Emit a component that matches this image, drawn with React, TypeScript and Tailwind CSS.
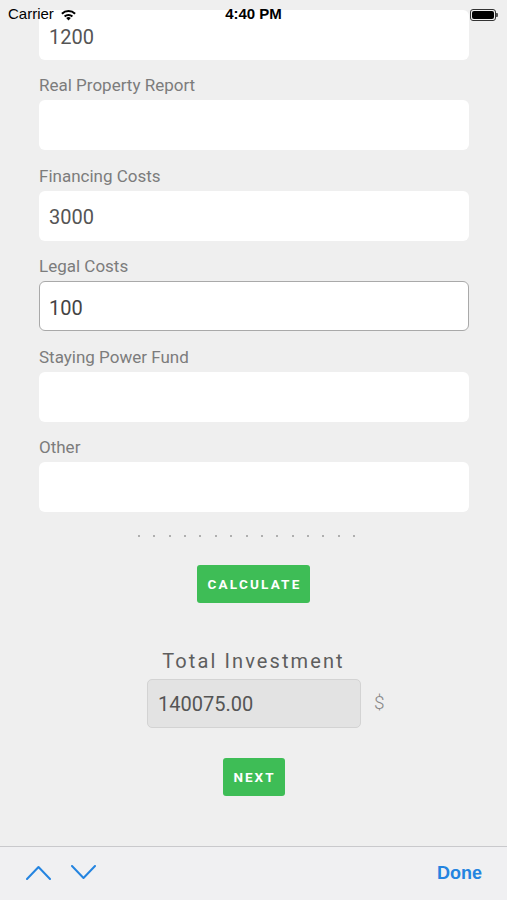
import React from "react";

const fields: { label: string; value: string; focused?: boolean }[] = [
  { label: "Appraisal", value: "1200" },
  { label: "Real Property Report", value: "" },
  { label: "Financing Costs", value: "3000" },
  { label: "Legal Costs", value: "100", focused: true },
  { label: "Staying Power Fund", value: "" },
  { label: "Other", value: "" },
];

export default function App() {
  return (
    <div
      className="relative w-[507px] h-[900px] overflow-hidden bg-[#efefef]"
      style={{ fontFamily: "Roboto, 'Liberation Sans', sans-serif" }}
    >
      {/* Status bar overlay */}
      <div
        className="absolute top-0 left-0 right-0 h-[29px] z-10 flex items-center justify-between px-[8px]"
        style={{ fontFamily: "'Liberation Sans', Arial, sans-serif" }}
      >
        <div className="flex items-center gap-[6px] text-[15px] text-black">
          <span>Carrier</span>
          <svg width="17" height="12" viewBox="0 0 17 12">
            <path d="M8.5 11.5 L6.2 9.1 A3.3 3.3 0 0 1 10.8 9.1 Z" fill="#000" />
            <path d="M3.9 6.8 A6.5 6.5 0 0 1 13.1 6.8 L11.7 8.2 A4.6 4.6 0 0 0 5.3 8.2 Z" fill="#000" />
            <path d="M1.2 4.1 A10.3 10.3 0 0 1 15.8 4.1 L14.4 5.5 A8.3 8.3 0 0 0 2.6 5.5 Z" fill="#000" />
          </svg>
        </div>
        <div className="absolute left-0 right-0 text-center text-[15px] font-bold text-black pointer-events-none">
          4:40 PM
        </div>
        <div className="flex items-center mr-[1px]">
          <div className="w-[26px] h-[12px] rounded-[3px] border border-[#333] p-[1px]">
            <div className="w-full h-full rounded-[2px] bg-black" />
          </div>
          <div className="w-[2px] h-[4px] bg-[#555] rounded-r-[1px]" />
        </div>
      </div>

      {/* Form */}
      <div className="flex flex-col gap-[15.4px] px-[39px] mt-[-15px] pr-[38px]">
        {fields.map((f, i) => (
          <div key={f.label} className="flex flex-col">
            <div
              className={
                i === 0
                  ? "h-[25px] pt-[1px] text-[17px] leading-[19px] text-[#7c7c7c] -translate-y-[5px]"
                  : "h-[25px] pt-[1px] text-[17px] leading-[19px] text-[#7c7c7c]"
              }
            >
              {f.label}
            </div>
            <div
              className={
                f.focused
                  ? "h-[50px] rounded-[6px] bg-white border-[1.5px] border-[#a9a9a9] flex items-center px-[9px] pt-[3px] text-[20px] text-[#444]"
                  : "h-[50px] rounded-[6px] bg-white flex items-center px-[10px] pt-[3px] text-[20px] text-[#555]"
              }
            >
              {f.value}
            </div>
          </div>
        ))}
      </div>

      {/* Dots */}
      <div className="flex justify-center mt-[23px]">
        <div className="flex gap-[13.4px] ml-[-14px]">
          {Array.from({ length: 15 }).map((_, i) => (
            <div key={i} className="w-[2px] h-[2px] rounded-full bg-[#9a9a9a]" />
          ))}
        </div>
      </div>

      {/* Calculate */}
      <div className="flex justify-center mt-[28px]">
        <button className="w-[113px] h-[38px] rounded-[3px] bg-[#3ebd56] text-white text-[13.5px] font-bold tracking-[2.2px] pl-[2px]">
          CALCULATE
        </button>
      </div>

      {/* Total Investment */}
      <div className="flex flex-col items-center mt-[46px]">
        <div className="text-[20px] leading-[24px] tracking-[2.1px] text-[#5e5e5e]">Total Investment</div>
        <div className="relative mt-[6px] ml-[1px]">
          <div className="w-[214px] h-[49px] rounded-[5px] bg-[#e3e3e3] border border-[#d3d3d3] flex items-center px-[10px] pt-[2px] text-[20px] text-[#555]">
            140075.00
          </div>
          <div className="absolute left-[227px] top-0 h-[49px] flex items-center text-[19px] font-light text-[#888]">$</div>
        </div>
      </div>

      {/* Next */}
      <div className="flex justify-center mt-[30px]">
        <button className="w-[62px] h-[38px] rounded-[3px] bg-[#3ebd56] text-white text-[13.5px] font-bold tracking-[2px] pl-[2px]">
          NEXT
        </button>
      </div>

      {/* Keyboard toolbar */}
      <div className="absolute left-0 right-0 bottom-0 h-[54px] bg-[#f0f0f2] border-t border-[#c9c9cc] flex items-center px-[26px]">
        <div className="flex items-center gap-[20px] mt-[-2px]">
          <svg width="25" height="15" viewBox="0 0 25 15">
            <path d="M1 14 L12.5 2 L24 14" fill="none" stroke="#2484e0" strokeWidth="2" strokeLinecap="round" strokeLinejoin="round" />
          </svg>
          <svg width="25" height="15" viewBox="0 0 25 15">
            <path d="M1 1 L12.5 13 L24 1" fill="none" stroke="#2484e0" strokeWidth="2" strokeLinecap="round" strokeLinejoin="round" />
          </svg>
        </div>
        <div
          className="ml-auto mr-[-1px] text-[18px] font-bold text-[#2484e0]"
          style={{ fontFamily: "'Liberation Sans', Arial, sans-serif" }}
        >
          Done
        </div>
      </div>
    </div>
  );
}
